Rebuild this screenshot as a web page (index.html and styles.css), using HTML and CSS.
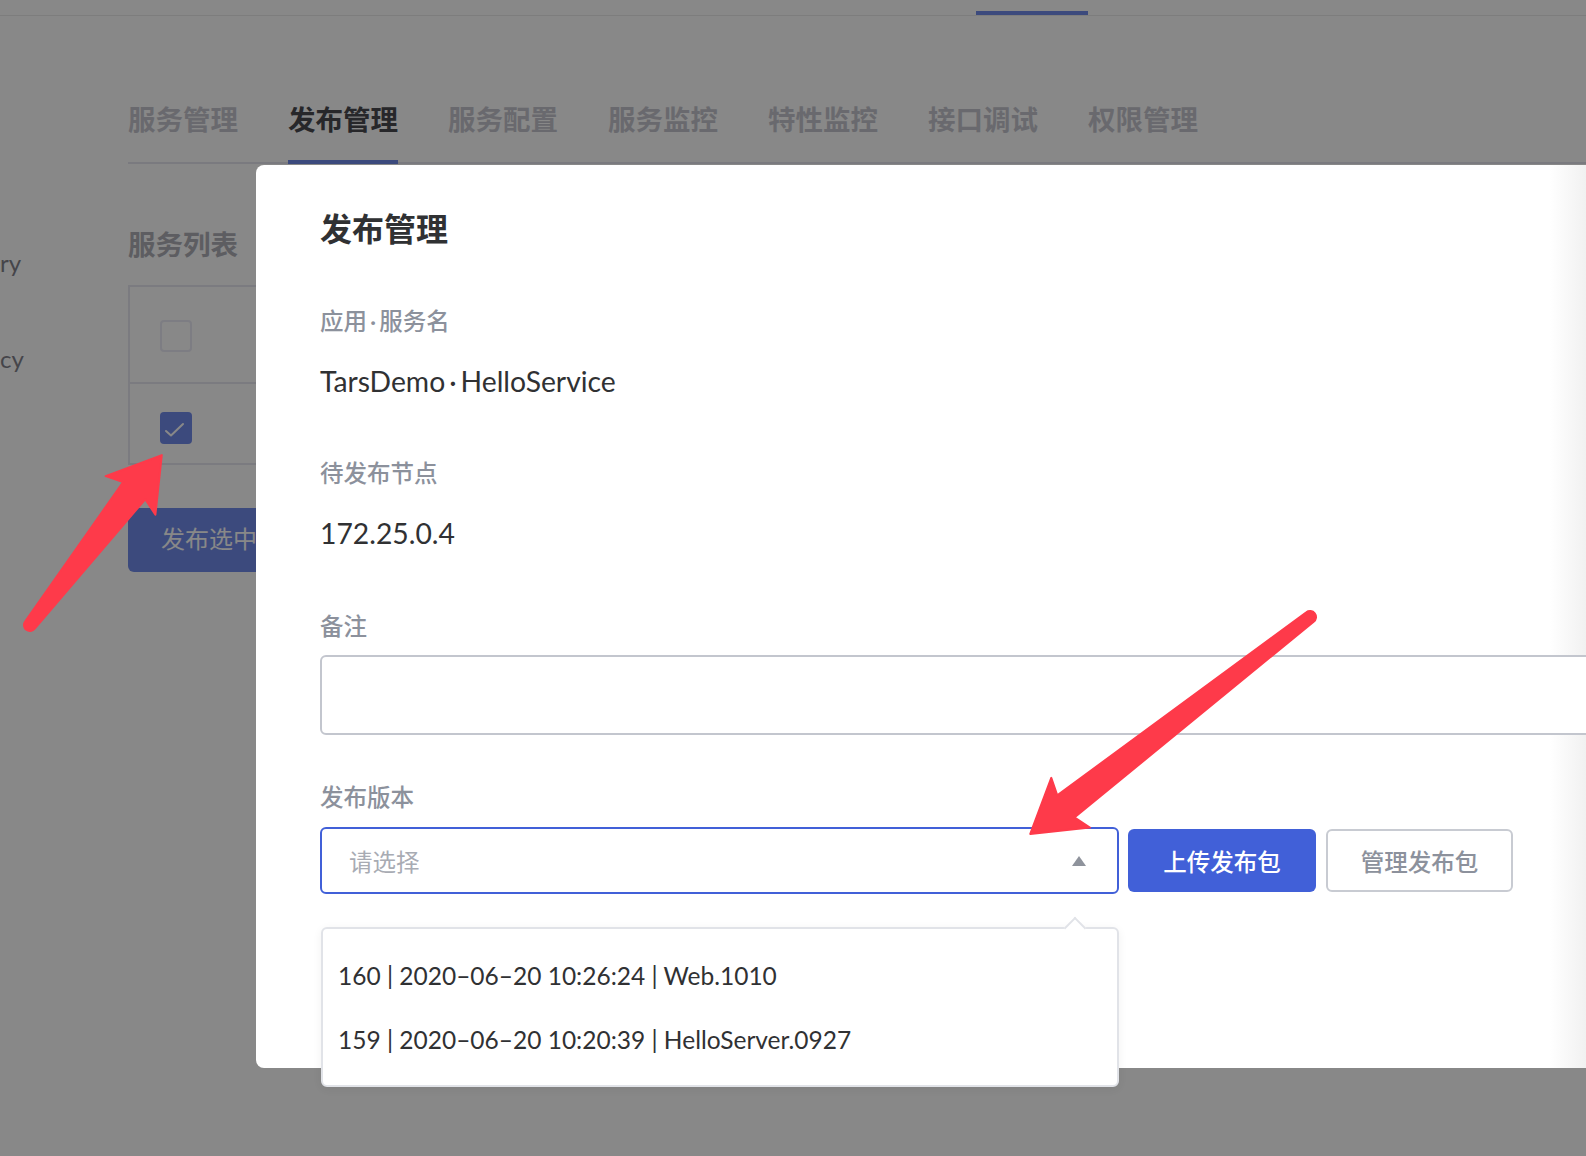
FILE: index.html
```html
<!DOCTYPE html>
<html lang="zh-CN">
<head>
<meta charset="utf-8">
<title>发布管理</title>
<link rel="stylesheet" href="styles.css">
</head>
<body>
<header class="topbar">
  <div class="topbar-active"></div>
</header>

<div class="layout">
  <aside class="sidebar">
    <div class="tree-item">ry</div>
    <div class="tree-item">cy</div>
  </aside>

  <main class="main">
    <nav class="tabs">
      <a class="tab">服务管理</a>
      <a class="tab active">发布管理</a>
      <a class="tab">服务配置</a>
      <a class="tab">服务监控</a>
      <a class="tab">特性监控</a>
      <a class="tab">接口调试</a>
      <a class="tab">权限管理</a>
    </nav>

    <h2 class="section-title">服务列表</h2>

    <div class="table">
      <div class="table-row table-head">
        <span class="checkbox"></span>
      </div>
      <div class="table-row table-body">
        <span class="checkbox checked">
          <svg width="32" height="32" viewBox="0 0 32 32"><path d="M6 19 L11 23.5 L23 12" fill="none" stroke="#ffffff" stroke-width="2" stroke-linecap="round" stroke-linejoin="round"/></svg>
        </span>
      </div>
    </div>

    <button class="btn-publish">发布选中</button>
  </main>
</div>

<div class="mask"></div>

<section class="dialog">
  <h3 class="dialog-title">发布管理</h3>

  <div class="field">
    <div class="field-label">应用<span class="dot">·</span>服务名</div>
    <div class="field-value">TarsDemo<span class="dot">·</span>HelloService</div>
  </div>

  <div class="field">
    <div class="field-label">待发布节点</div>
    <div class="field-value">172.25.0.4</div>
  </div>

  <div class="field field-remark">
    <div class="field-label">备注</div>
    <textarea class="textarea"></textarea>
  </div>

  <div class="field field-version">
    <div class="field-label">发布版本</div>
    <div class="version-row">
      <div class="select">
        <span class="select-placeholder">请选择</span>
        <span class="select-arrow"></span>
        <div class="dropdown">
          <div class="dropdown-item">160 | 2020–06–20 10:26:24 | Web.1010</div>
          <div class="dropdown-item">159 | 2020–06–20 10:20:39 | HelloServer.0927</div>
        </div>
      </div>
      <button class="btn btn-upload">上传发布包</button>
      <button class="btn btn-manage">管理发布包</button>
    </div>
  </div>
</section>

<svg class="annotations" width="1586" height="1156" viewBox="0 0 1586 1156">
  <path transform="translate(30 625) rotate(-52.2)" d="M0 -6 L170 -14 L164 -31.5 L215 0 L164 31.5 L170 14 L0 6 A6 6 0 0 1 0 -6 Z" fill="#fe3a4a" stroke="#fe3a4a" stroke-width="2" stroke-linejoin="round"/>
  <path transform="translate(1310 617) rotate(142.2)" d="M0 -6 L309 -14 L303 -31.5 L354 0 L303 31.5 L309 14 L0 6 A6 6 0 0 1 0 -6 Z" fill="#fe3a4a" stroke="#fe3a4a" stroke-width="2" stroke-linejoin="round"/>
</svg>
</body>
</html>
```

FILE: styles.css
```css
html, body {
  margin: 0;
  padding: 0;
}

body {
  width: 1586px;
  height: 1156px;
  overflow: hidden;
  position: relative;
  background: #ffffff;
  font-family: Lato, "Noto Sans CJK SC", sans-serif;
  color: #303133;
}

/* ---------- page behind the mask ---------- */
.topbar {
  height: 15px;
  border-bottom: 1px solid #ebebeb;
  display: flex;
  align-items: flex-end;
}

.topbar-active {
  margin-left: 976px;
  width: 112px;
  height: 4px;
  background: #718beb;
}

.layout {
  display: flex;
}

.sidebar {
  width: 128px;
  flex: none;
  padding-top: 199px;
  box-sizing: border-box;
}

.tree-item {
  white-space: nowrap;
  font-size: 24px;
  line-height: 96px;
  color: #82828b;
}

.main {
  flex: 1;
  min-width: 0;
}

.tabs {
  margin-top: 84px;
  display: flex;
  gap: 50px;
  border-bottom: 2px solid #e5e5ee;
}

.tab {
  font-size: 27.5px;
  line-height: 40px;
  font-weight: 700;
  color: #c6c6ce;
  padding-bottom: 20px;
  border-bottom: 4px solid transparent;
  margin-bottom: -2px;
}

.tab.active {
  color: #4a4a50;
  border-bottom-color: #718beb;
}

.section-title {
  margin: 61px 0 20px;
  font-size: 27.5px;
  line-height: 40px;
  font-weight: 700;
  color: #aeaeb6;
}

.table {
  width: 1200px;
  border: 2px solid #e7e7f0;
  border-right: none;
}

.table-row {
  box-sizing: border-box;
  padding-left: 30px;
}

.table-head {
  height: 95px;
  padding-top: 33px;
}

.table-body {
  height: 81px;
  padding-top: 28px;
  border-top: 2px solid #e7e7f0;
}

.checkbox {
  display: block;
  width: 32px;
  height: 32px;
  box-sizing: border-box;
  border: 2px solid #ebebf5;
  border-radius: 4px;
  background: #ffffff;
}

.checkbox.checked {
  border: none;
  background: #718beb;
}

.checkbox svg {
  display: block;
}

.btn-publish {
  margin-top: 43px;
  width: 200px;
  height: 64px;
  border: none;
  border-radius: 6px;
  background: #718beb;
  color: #ffffff;
  font-family: Lato, "Noto Sans CJK SC", sans-serif;
  font-size: 24px;
  text-align: left;
  padding: 0 0 6px 33px;
}

/* ---------- mask ---------- */
.mask {
  position: absolute;
  inset: 0;
  background: rgba(0, 0, 0, 0.467);
}

/* ---------- dialog ---------- */
.dialog {
  position: absolute;
  left: 256px;
  top: 165px;
  width: 1330px;
  height: 903px;
  box-sizing: border-box;
  padding: 44px 0 0 64px;
  border-radius: 8px 0 0 8px;
  background: linear-gradient(to right, #ffffff 0, #ffffff calc(100% - 36px), #f1f1f1 100%);
}

.dialog-title {
  margin: 0 0 5px;
  font-size: 32px;
  line-height: 40px;
  font-weight: 700;
  color: #303133;
}

.field {
  margin-top: 56px;
}

.field-label {
  font-size: 23.5px;
  line-height: 32px;
  font-weight: 500;
  color: #8c919c;
  margin-bottom: 24px;
}

.field-value {
  font-size: 28.3px;
  line-height: 40px;
  color: #303133;
}

.dot {
  margin: 0 4px;
}

.field-label .dot {
  margin: 0 3px;
}

.field-remark {
  margin-top: 57px;
}

.textarea {
  display: block;
  margin-top: -11px;
  width: 1300px;
  height: 80px;
  box-sizing: border-box;
  border: 2px solid #c3c6ce;
  border-radius: 6px;
  resize: none;
  outline: none;
  background: #ffffff;
}

.field-version {
  margin-top: 46px;
}

.field-version .field-label {
  margin-bottom: 14px;
}

.version-row {
  display: flex;
  align-items: center;
}

.select {
  position: relative;
  width: 799px;
  height: 67px;
  box-sizing: border-box;
  border: 2px solid #4160d8;
  border-radius: 6px;
  display: flex;
  align-items: center;
  padding: 0 31px 0 27px;
}

.select-placeholder {
  flex: 1;
  font-size: 23.5px;
  color: #a8abb3;
}

.select-arrow {
  width: 0;
  height: 0;
  border-left: 7px solid transparent;
  border-right: 7px solid transparent;
  border-bottom: 10px solid #8f939c;
}

.dropdown {
  position: absolute;
  left: -1px;
  top: 98px;
  width: 798px;
  height: 160px;
  box-sizing: border-box;
  padding-top: 15px;
  background: #ffffff;
  border: 2px solid #e1e3e8;
  border-radius: 6px;
  box-shadow: 0 2px 10px rgba(0, 0, 0, 0.06);
}

.dropdown::before {
  content: "";
  position: absolute;
  left: 744px;
  top: -9px;
  width: 14px;
  height: 14px;
  background: #ffffff;
  border-top: 2px solid #e1e3e8;
  border-left: 2px solid #e1e3e8;
  transform: rotate(45deg);
}

.dropdown-item {
  height: 64px;
  line-height: 64px;
  padding-left: 15px;
  font-size: 24.5px;
  color: #303133;
  white-space: nowrap;
}

.btn {
  height: 63px;
  box-sizing: border-box;
  border-radius: 6px;
  font-family: Lato, "Noto Sans CJK SC", sans-serif;
  font-size: 23.5px;
  font-weight: 500;
  padding: 0;
}

.btn-upload {
  margin-left: 9px;
  width: 188px;
  border: none;
  background: #4160d8;
  color: #ffffff;
}

.btn-manage {
  margin-left: 10px;
  width: 187px;
  border: 2px solid #c8cbd2;
  background: #ffffff;
  color: #8c919c;
}

/* ---------- annotation arrows ---------- */
.annotations {
  position: absolute;
  left: 0;
  top: 0;
  pointer-events: none;
}
```
